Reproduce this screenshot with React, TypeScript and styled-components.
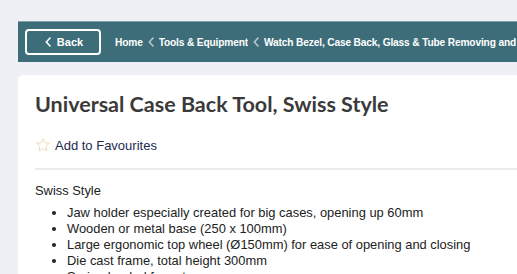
import React from "react";
import styled, { createGlobalStyle } from "styled-components";

const Global = createGlobalStyle`
  html, body { margin: 0; padding: 0; background: #eef0f5; overflow: hidden; }
  body { font-family: "Liberation Sans", Arial, sans-serif; }
`;

const Page = styled.div`
  padding: 21px 0 0 18px;
  display: flex;
  flex-direction: column;
  gap: 13px;
  width: 540px;
  height: 253px;
  overflow: hidden;
`;

const Bar = styled.nav`
  flex-shrink: 0;
  height: 41px;
  background: #3d6d79;
  border-top: 1px solid #7fa2ab;
  box-sizing: border-box;
  display: flex;
  align-items: center;
  padding-left: 7px;
  gap: 14px;
  overflow: hidden;
`;

const BackButton = styled.button`
  flex-shrink: 0;
  width: 76px;
  height: 26px;
  box-sizing: border-box;
  border: 2px solid #ffffff;
  border-radius: 4px;
  background: transparent;
  color: #fff;
  font: bold 11px "Liberation Sans", Arial, sans-serif;
  display: flex;
  align-items: center;
  justify-content: center;
  gap: 6px;
  padding: 0 0 0 2px;
`;

const Crumbs = styled.ol`
  list-style: none;
  margin: 0;
  padding: 0;
  display: flex;
  align-items: center;
  gap: 5px;
  color: #fff;
  font: bold 10.2px "Liberation Sans", Arial, sans-serif;
  letter-spacing: -0.16px;
`;

const Crumb = styled.li`
  display: flex;
  align-items: center;
  gap: 5px;
  flex-shrink: 0;
  white-space: nowrap;
`;

const CrumbText = styled.span<{ $width?: number }>`
  white-space: ${(p) => (p.$width ? "normal" : "nowrap")};
  width: ${(p) => (p.$width ? `${p.$width}px` : "auto")};
  line-height: 13px;
  max-height: 13px;
  overflow: hidden;
`;

const Chevron = ({ color = "#fff" }: { color?: string }) => (
  <svg width="6" height="10" viewBox="0 0 6 10" style={{ flexShrink: 0 }}>
    <path d="M5 1 L1.3 5 L5 9" fill="none" stroke={color} strokeWidth="1.6" strokeLinecap="round" strokeLinejoin="round" />
  </svg>
);

const Card = styled.main`
  flex: 1;
  background: #fff;
  border-radius: 5px 0 0 0;
  padding: 14px 0 0 17px;
  white-space: nowrap;
  overflow: hidden;
`;

const Title = styled.h1`
  margin: 0;
  font: bold 21.5px Lato, "Liberation Sans", sans-serif;
  color: #3a3a3a;
  line-height: 30px;
`;

const Fav = styled.div`
  margin-top: 17px;
  display: flex;
  align-items: center;
  gap: 4px;
  color: #1b2a4e;
  font-size: 13px;
  height: 18px;
`;

const Divider = styled.hr`
  margin: 14px 0 0;
  border: 0;
  border-top: 2px solid #ebebeb;
`;

const Body = styled.div`
  padding-top: 13px;
  color: #222;
  font-size: 12.9px;
  line-height: 16px;
`;

const List = styled.ul`
  margin: 6px 0 0;
  padding-left: 32px;
  li { line-height: 16px; }
`;

export default function App() {
  return (
    <>
      <Global />
      <Page>
        <Bar>
          <BackButton>
            <Chevron />
            Back
          </BackButton>
          <Crumbs>
            <Crumb><CrumbText>Home</CrumbText></Crumb>
            <Crumb><Chevron color="#b9c9cd" /><CrumbText>Tools &amp; Equipment</CrumbText></Crumb>
            <Crumb>
              <Chevron color="#b9c9cd" />
              <CrumbText $width={252}>Watch Bezel, Case Back, Glass &amp; Tube Removing and Closing</CrumbText>
            </Crumb>
          </Crumbs>
        </Bar>
        <Card>
          <Title>Universal Case Back Tool, Swiss Style</Title>
          <Fav>
            <svg width="16" height="16" viewBox="0 0 24 24">
              <path d="M12 2.5l2.9 6.1 6.6.8-4.9 4.6 1.3 6.6L12 17.3l-5.9 3.3 1.3-6.6-4.9-4.6 6.6-.8z" fill="none" stroke="#ecd9b3" strokeWidth="1.4" strokeLinejoin="round" />
            </svg>
            Add to Favourites
          </Fav>
          <Divider />
          <Body>
            Swiss Style
            <List>
              <li>Jaw holder especially created for big cases, opening up 60mm</li>
              <li>Wooden or metal base (250 x 100mm)</li>
              <li>Large ergonomic top wheel (Ø150mm) for ease of opening and closing</li>
              <li>Die cast frame, total height 300mm</li>
              <li>Spring loaded for extra ease</li>
            </List>
          </Body>
        </Card>
      </Page>
    </>
  );
}
